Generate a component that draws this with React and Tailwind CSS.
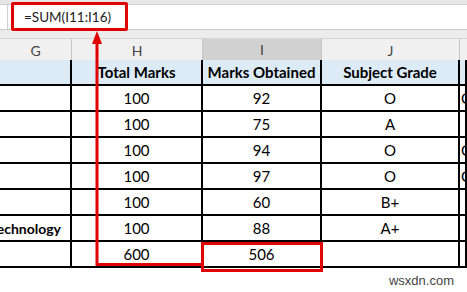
const cols = 'grid grid-cols-[72px_131px_119px_138px_7px]';

const rows = [
  ['', '100', '92', 'O', 'O'],
  ['', '100', '75', 'A', ''],
  ['', '100', '94', 'O', 'O'],
  ['', '100', '97', 'O', 'O'],
  ['', '100', '60', 'B+', ''],
  ['Technology', '100', '88', 'A+', ''],
  ['', '600', '506', '', ''],
];

const Cell = ({ children, className = '' }) => (
  <div className={`h-[26px] border-b-2 border-r-2 border-black flex items-center justify-center overflow-hidden ${className}`}>
    {children}
  </div>
);

export default function App() {
  return (
    <div className="relative w-[467px] h-[292px] overflow-hidden bg-white font-['Lato',sans-serif] text-black">
      {/* barre de formule */}
      <div className="h-[5px] bg-[#e6e6e6] border-b border-[#d0d0d0]" />
      <div className="h-[25px] flex bg-white border-b border-[#c8c8c8]">
        <div className="w-[8px] border-r border-[#d0d0d0]" />
        <div className="pl-[16px] flex items-center text-[13.5px] text-[#222]">=SUM(I11:I16)</div>
      </div>
      <div className="h-[9px] bg-[#ececec] border-b border-[#d4d4d4]" />

      {/* en-têtes de colonnes */}
      <div className={`${cols} h-[21px] text-[14px] text-[#444]`}>
        <div className="bg-[#f0f0f0] border-r border-b border-[#c6c6c6] flex items-center justify-center">G</div>
        <div className="bg-[#f0f0f0] border-r border-b border-[#c6c6c6] flex items-center justify-center">H</div>
        <div className="bg-[#d2d2d2] border-r border-[#c6c6c6] border-b-2 border-b-[#217346] flex items-center justify-center">I</div>
        <div className="bg-[#f0f0f0] border-r border-b border-[#c6c6c6] flex items-center justify-center">J</div>
        <div className="bg-[#f0f0f0] border-b border-[#c6c6c6]" />
      </div>

      {/* tableau */}
      <div className={`${cols} text-[15px]`}>
        <Cell className="bg-[#ddebf7]" />
        <Cell className="bg-[#ddebf7] font-bold">Total Marks</Cell>
        <Cell className="bg-[#ddebf7] font-bold">Marks Obtained</Cell>
        <Cell className="bg-[#ddebf7] font-bold">Subject Grade</Cell>
        <Cell className="bg-[#ddebf7] border-r-0" />
        {rows.map((r, i) => (
          <div key={i} className="contents">
            <Cell className="justify-end pr-[9px] text-[14px] font-bold whitespace-nowrap">{r[0]}</Cell>
            <Cell>{r[1]}</Cell>
            <Cell>{r[2]}</Cell>
            <Cell>{r[3]}</Cell>
            <Cell className="justify-start pl-[1px] border-r-0">{r[4]}</Cell>
          </div>
        ))}
      </div>

      <div className="flex justify-end pr-[13px] pt-[3px] text-[13px] text-[#444] font-['Liberation_Sans',sans-serif]">wsxdn.com</div>

      {/* annotations rouges */}
      <div className="absolute left-[11px] top-[2px] w-[117px] h-[29px] border-[3px] border-[#e00000] rounded-[2px]" />
      <div className="absolute left-[201px] top-[242px] w-[122px] h-[30px] border-[3px] border-[#e00000]" />
      <svg className="absolute left-0 top-0" width="467" height="292">
        <path d="M97 42 V264.5 H202" fill="none" stroke="#e00000" strokeWidth="3" />
        <path d="M97 31 L102 44 L92 44 Z" fill="#e00000" />
      </svg>
    </div>
  );
}
